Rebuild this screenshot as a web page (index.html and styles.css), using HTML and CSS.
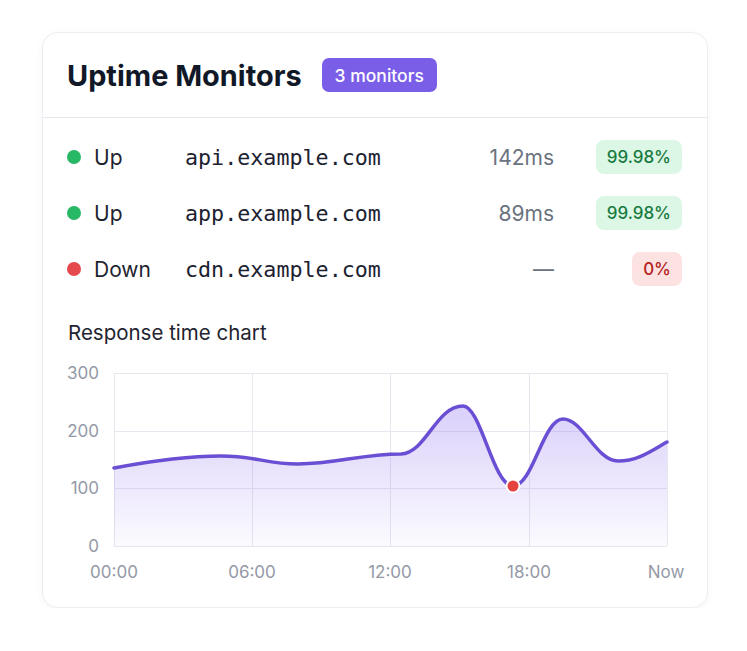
FILE: index.html
```html
<!DOCTYPE html>
<html lang="en">
<head>
<meta charset="UTF-8">
<meta name="viewport" content="width=device-width, initial-scale=1.0">
<link rel="stylesheet" href="styles.css">
<title>Uptime Monitors</title>
</head>
<body>
<div class="card">

  <div class="card-header">
    <h1 class="title">Uptime Monitors</h1>
    <span class="count">3 monitors</span>
  </div>

  <div class="monitors">
    <div class="monitor">
      <span class="status"><span class="dot up"></span>Up</span>
      <span class="host">api.example.com</span>
      <span class="latency">142ms</span>
      <span class="pill good">99.98%</span>
    </div>
    <div class="monitor">
      <span class="status"><span class="dot up"></span>Up</span>
      <span class="host">app.example.com</span>
      <span class="latency">89ms</span>
      <span class="pill good">99.98%</span>
    </div>
    <div class="monitor">
      <span class="status"><span class="dot down"></span>Down</span>
      <span class="host">cdn.example.com</span>
      <span class="latency">&mdash;</span>
      <span class="pill bad">0%</span>
    </div>
  </div>

  <div class="chart">
    <h2 class="chart-title">Response time chart</h2>
    <!-- viewBox uses page coordinates so points read straight off the layout -->
    <svg class="chart-svg" width="620" height="225" viewBox="67 360 620 225">
      <defs>
        <linearGradient id="area" x1="0" y1="0" x2="0" y2="1">
          <stop offset="0" stop-color="#8b6cf0" stop-opacity="0.32"/>
          <stop offset="1" stop-color="#8b6cf0" stop-opacity="0.03"/>
        </linearGradient>
      </defs>

      <g class="grid">
        <line x1="113" y1="372.5" x2="666" y2="372.5"/>
        <line x1="113" y1="430.5" x2="666" y2="430.5"/>
        <line x1="113" y1="487.5" x2="666" y2="487.5"/>
        <line x1="113" y1="545.5" x2="666" y2="545.5"/>
        <line x1="113.5" y1="372" x2="113.5" y2="545"/>
        <line x1="251.5" y1="372" x2="251.5" y2="545"/>
        <line x1="389.5" y1="372" x2="389.5" y2="545"/>
        <line x1="528.5" y1="372" x2="528.5" y2="545"/>
        <line x1="666.5" y1="372" x2="666.5" y2="545"/>
      </g>

      <path class="area" d="M113,467 C150,460 185,455 220,455 C255,455 265,463 297,463 C335,463 360,453 400,453 C425,452 435,405 462,405 C480,405 492,485 512,485 C532,485 542,418 562,418 C582,418 595,460 617,460 C637,460 650,450 666,441 L666,545 L113,545 Z"/>
      <path class="line" d="M113,467 C150,460 185,455 220,455 C255,455 265,463 297,463 C335,463 360,453 400,453 C425,452 435,405 462,405 C480,405 492,485 512,485 C532,485 542,418 562,418 C582,418 595,460 617,460 C637,460 650,450 666,441"/>
      <circle class="outage" cx="512" cy="485" r="6.5"/>

      <g class="y-labels">
        <text x="98" y="373">300</text>
        <text x="98" y="431">200</text>
        <text x="98" y="488">100</text>
        <text x="98" y="546">0</text>
      </g>
      <g class="x-labels">
        <text x="113" y="572">00:00</text>
        <text x="251" y="572">06:00</text>
        <text x="389" y="572">12:00</text>
        <text x="528" y="572">18:00</text>
        <text x="665" y="572">Now</text>
      </g>
    </svg>
  </div>

</div>
</body>
</html>
```

FILE: styles.css
```css
body {
  margin: 0;
  background: #fff;
  font-family: "Inter", "Noto Sans", sans-serif;
  color: #1f2430;
}

.card {
  width: 666px;
  margin: 32px 0 0 42px;
  background: #fff;
  border: 1px solid #eceef3;
  border-radius: 16px;
  box-shadow: 0 2px 8px rgba(20, 24, 40, 0.04);
  box-sizing: border-box;
}

.card-header {
  display: flex;
  align-items: center;
  gap: 20px;
  height: 84px;
  padding: 0 25px 0 24px;
  border-bottom: 1px solid #e6e8ee;
}

.title {
  margin: 0;
  font-size: 28.9px;
  font-weight: 700;
  letter-spacing: 0;
  color: #111827;
}

.count {
  display: inline-flex;
  align-items: center;
  height: 34px;
  padding: 0 13px;
  border-radius: 7px;
  background: #7b5ee8;
  color: #fff;
  font-size: 17.5px;
  font-weight: 500;
}

.monitors {
  padding: 11px 25px 0 24px;
}

.monitor {
  display: grid;
  grid-template-columns: 118px 1fr auto 128px;
  align-items: center;
  height: 56px;
  font-size: 21px;
}

.status {
  display: flex;
  align-items: center;
  gap: 13px;
  color: #1f2430;
}

.dot {
  width: 14px;
  height: 14px;
  border-radius: 50%;
}

.dot.up {
  background: #26b865;
}

.dot.down {
  background: #e5484d;
}

.host {
  font-family: "DejaVu Sans Mono", monospace;
  font-size: 21.7px;
  color: #1c2230;
}

.latency {
  color: #6b7280;
  text-align: right;
}

.pill {
  justify-self: end;
  display: inline-flex;
  align-items: center;
  height: 34px;
  padding: 0 11px;
  border-radius: 8px;
  font-size: 17px;
  font-weight: 500;
}

.pill.good {
  background: #dcf7e6;
  color: #187a3f;
}

.pill.bad {
  background: #fde2e2;
  color: #b42323;
}

.chart {
  padding: 22px 0 21px 25px;
}

.chart-title {
  margin: 0;
  height: 28px;
  line-height: 28px;
  font-size: 20.5px;
  font-weight: 400;
  color: #1f2430;
}

.chart-svg {
  display: block;
  margin-top: 14px;
  overflow: visible;
}

.grid line {
  stroke: #e6e7ef;
  stroke-width: 1;
}

.area {
  fill: url(#area);
}

.line {
  fill: none;
  stroke: #6a4fd4;
  stroke-width: 3.5;
  stroke-linecap: round;
}

.outage {
  fill: #e5433f;
  stroke: #fff;
  stroke-width: 2;
}

.y-labels text,
.x-labels text {
  font-family: "Inter", "Noto Sans", sans-serif;
  font-size: 17px;
  fill: #9499a6;
  dominant-baseline: middle;
}

.y-labels text {
  text-anchor: end;
}

.x-labels text {
  text-anchor: middle;
}
```
